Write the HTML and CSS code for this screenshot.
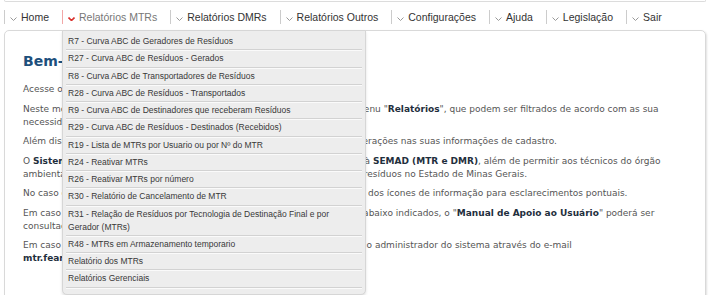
FILE: index.html
```html
<!DOCTYPE html>
<html>
<head>
    <meta charset="utf-8">
    <title>MTR - Sistema de Controle de Resíduos</title>
    <link rel="stylesheet" href="styles.css">
</head>
<body>
    <div class="header-edge"></div>

    <ul class="menu">
        <li><svg class="caret" viewBox="0 0 7 4"><path d="M0.5 0.5 L3.5 3.5 L6.5 0.5"/></svg>Home</li>
        <li class="open"><svg class="caret" viewBox="0 0 7 4"><path d="M0.5 0.5 L3.5 3.5 L6.5 0.5"/></svg>Relatórios MTRs
            <ul class="dropdown">
                <li>R7 - Curva ABC de Geradores de Resíduos</li>
                <li>R27 - Curva ABC de Resíduos - Gerados</li>
                <li>R8 - Curva ABC de Transportadores de Resíduos</li>
                <li>R28 - Curva ABC de Resíduos - Transportados</li>
                <li>R9 - Curva ABC de Destinadores que receberam Resíduos</li>
                <li>R29 - Curva ABC de Resíduos - Destinados (Recebidos)</li>
                <li>R19 - Lista de MTRs por Usuario ou por Nº do MTR</li>
                <li>R24 - Reativar MTRs</li>
                <li>R26 - Reativar MTRs por número</li>
                <li>R30 - Relatório de Cancelamento de MTR</li>
                <li>R31 - Relação de Resíduos por Tecnologia de Destinação Final e por Gerador (MTRs)</li>
                <li>R48 - MTRs em Armazenamento temporario</li>
                <li>Relatório dos MTRs</li>
                <li>Relatórios Gerenciais</li>
            </ul>
        </li>
        <li><svg class="caret" viewBox="0 0 7 4"><path d="M0.5 0.5 L3.5 3.5 L6.5 0.5"/></svg>Relatórios DMRs</li>
        <li><svg class="caret" viewBox="0 0 7 4"><path d="M0.5 0.5 L3.5 3.5 L6.5 0.5"/></svg>Relatórios Outros</li>
        <li><svg class="caret" viewBox="0 0 7 4"><path d="M0.5 0.5 L3.5 3.5 L6.5 0.5"/></svg>Configurações</li>
        <li><svg class="caret" viewBox="0 0 7 4"><path d="M0.5 0.5 L3.5 3.5 L6.5 0.5"/></svg>Ajuda</li>
        <li><svg class="caret" viewBox="0 0 7 4"><path d="M0.5 0.5 L3.5 3.5 L6.5 0.5"/></svg>Legislação</li>
        <li><svg class="caret" viewBox="0 0 7 4"><path d="M0.5 0.5 L3.5 3.5 L6.5 0.5"/></svg>Sair</li>
    </ul>

    <div class="panel">
        <h2>Bem-vindo ao Sistema MTR</h2>
        <p>Acesse o menu acima para navegar pelo sistema.</p>
        <p>Neste módulo estarão disponíveis os relatórios gerenciais ora listados no menu "<b>Relatórios</b>", que podem ser filtrados de acordo com as sua necessidades.</p>
        <p>Além disso, através do menu "Configurações", o usuário poderá realizar alterações nas suas informações de cadastro.</p>
        <p>O <b>Sistema MTR-MG</b> possibilita o envio das declarações dos seus resíduos à <b>SEMAD (MTR e DMR)</b>, além de permitir aos técnicos do órgão ambiental o acompanhamento da geração, do transporte e destinação dos resíduos no Estado de Minas Gerais.</p>
        <p>No caso de dúvidas sobre o preenchimento, faça uso do help de cada tela e dos ícones de informação para esclarecimentos pontuais.</p>
        <p>Em caso de dúvidas quanto ao uso do sistema, ou sobre os procedimentos abaixo indicados, o "<b>Manual de Apoio ao Usuário</b>" poderá ser consultado.</p>
        <p>Em caso de problemas técnicos e/ou outras dúvidas, entre em contato com o administrador do sistema através do e-mail <b>mtr.feam@meioambiente.mg.gov.br</b></p>
    </div>
</body>
</html>
```

FILE: styles.css
```css
body {
    margin: 0;
    padding: 0 3px 0 4px;
    font-family: "DejaVu Sans", Verdana, sans-serif;
    background: #fff;
    overflow: hidden;
}

.header-edge {
    height: 1px;
    border: 1px solid #dcdcdc;
    border-top: none;
    border-radius: 0 0 4px 4px;
}

.menu {
    list-style: none;
    margin: 0;
    padding: 8px 0 6px;
    display: flex;
    font-family: "Liberation Sans", Arial, sans-serif;
    font-size: 10.5px;
    color: #333;
}

.menu > li {
    position: relative;
    display: flex;
    align-items: center;
    height: 14px;
    padding: 0 13px 0 5px;
    border-left: 1px solid #ccc;
}

.caret {
    width: 7px;
    height: 4px;
    margin: 3px 4px 0 0;
    fill: none;
    stroke: #999;
    stroke-width: 1;
}

.menu > li.open {
    color: #777;
    border-left-color: #f2a7a7;
}

.menu > li.open .caret {
    stroke: #d9302c;
    stroke-width: 1.6;
}

.dropdown {
    position: absolute;
    left: -1px;
    top: 20px;
    z-index: 10;
    width: 296px;
    margin: 0;
    padding: 3px 3px 5px;
    list-style: none;
    background: #ededed;
    border: 1px solid #d6d6d6;
    border-radius: 0 0 5px 5px;
    box-shadow: 0 2px 3px rgba(0,0,0,0.12);
    font-size: 8.5px;
    color: #383838;
}

.dropdown li {
    padding: 1px 2px 1.25px;
    line-height: 13px;
    border-bottom: 1px solid #d2d2d2;
    box-shadow: 0 1px 0 #fafafa;
    margin-bottom: 1px;
}

.panel {
    min-height: 300px;
    padding: 22px 20px 0 18px;
    border: 1px solid #d9d9d9;
    border-radius: 5px;
    box-shadow: 1px 1px 2px rgba(0,0,0,0.12);
    color: #555;
    font-size: 9px;
    line-height: 13px;
}

.panel h2 {
    margin: 0 0 13px 0;
    font-size: 14px;
    line-height: 17px;
    color: #1d4f7c;
}

.panel p {
    margin: 0 0 6.5px 0;
}

.panel b {
    color: #1f2f3d;
}
```
